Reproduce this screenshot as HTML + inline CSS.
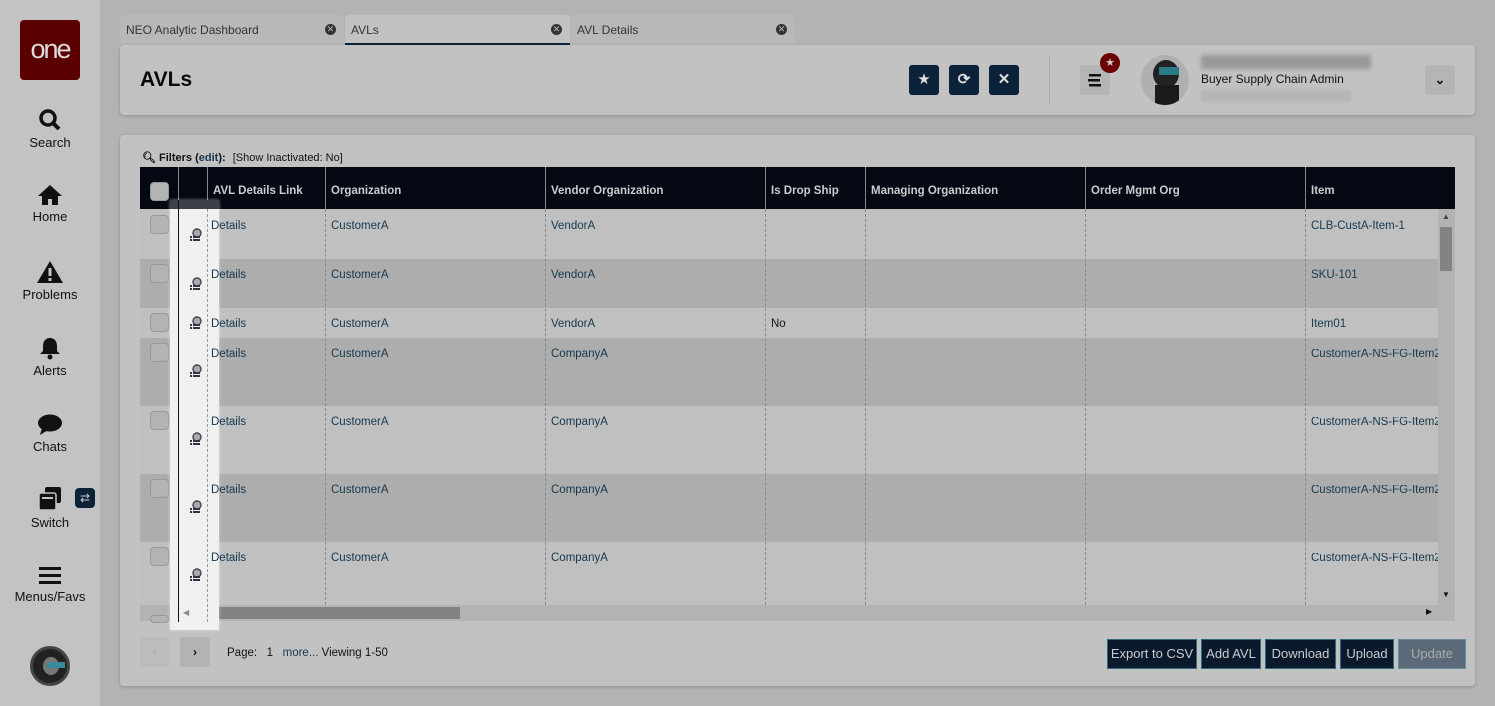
<!DOCTYPE html>
<html><head><style>
*{box-sizing:border-box;margin:0;padding:0}
body{width:1495px;height:706px;background:#b3b3b3;font-family:"Liberation Sans",sans-serif;position:relative;overflow:hidden;font-size:12px;color:#111}
.side{position:absolute;left:0;top:0;width:100px;height:706px;background:#c3c3c3}
.logo{position:absolute;left:20px;top:20px;width:60px;height:60px;background:#5a0000;border-radius:4px;color:#ddd;font-size:27px;text-align:center;line-height:58px;letter-spacing:-2px}
.nav{position:absolute;left:0;width:100px;text-align:center;font-size:13px;color:#111}
.abs{position:absolute;white-space:nowrap}
.tab{position:absolute;top:15px;height:30px;background:#b8b8b8;border-radius:4px 4px 0 0;font-size:12px;color:#333;padding:8px 6px}
.tab .x{position:absolute;right:8px;top:9px;width:11px;height:11px;border-radius:50%;background:#333;color:#bbb;font-size:9px;line-height:11px;text-align:center}
.card{position:absolute;background:#c2c2c2;border-radius:4px;box-shadow:0 1px 3px rgba(0,0,0,.2)}
.btn{position:absolute;top:65px;width:30px;height:30px;background:#0c2238;border-radius:3px;color:#ddd;text-align:center;line-height:30px;font-size:15px}
.hdr{position:absolute;top:167px;left:140px;width:1315px;height:42px;background:#030813}
.hdr div{position:absolute;top:0;height:42px;color:#ccc;font-weight:bold;font-size:11.5px;line-height:48px;padding-left:5px;border-left:1px solid #888}
.row{position:absolute;left:140px;width:1298px}
.vl{position:absolute;top:209px;height:396px;border-left:1px dashed #888}
.cb{position:absolute;left:150px;width:19px;height:19px;border:1.5px solid #999;border-radius:4px;background:#b3b3b3}
.fbtn{position:absolute;top:639px;height:30px;background:#0a1a2c;border:1px solid #2c6a7c;color:#ccc;font-size:13px;text-align:center;line-height:28px}
</style></head><body>
<div class="side">
<div class="logo">one</div>
<div class="nav" style="top:108px"><svg width="24" height="24" viewBox="0 0 24 24"><circle cx="10" cy="10" r="7" stroke="#111" stroke-width="3.5" fill="none"/><path d="M15 15l6 6" stroke="#111" stroke-width="4"/></svg><br>Search</div>
<div class="nav" style="top:184px"><svg width="26" height="22" viewBox="0 0 26 22"><path d="M13 1L1 12h4v9h6v-6h4v6h6v-9h4z" fill="#111"/></svg><br>Home</div>
<div class="nav" style="top:260px"><svg width="28" height="24" viewBox="0 0 28 24"><path d="M14 1L1 23h26z" fill="#111"/><rect x="12.5" y="8" width="3" height="8" fill="#c3c3c3"/><rect x="12.5" y="18" width="3" height="3" fill="#c3c3c3"/></svg><br>Problems</div>
<div class="nav" style="top:336px"><svg width="22" height="24" viewBox="0 0 22 24"><path d="M11 2c-5 0-7 4-7 8v5l-3 3h20l-3-3v-5c0-4-2-8-7-8z" fill="#111"/><circle cx="11" cy="21" r="2.5" fill="#111"/></svg><br>Alerts</div>
<div class="nav" style="top:414px"><svg width="26" height="22" viewBox="0 0 26 22"><ellipse cx="13" cy="9" rx="12" ry="8.5" fill="#111"/><path d="M5 14l-2 7 8-5z" fill="#111"/></svg><br>Chats</div>
<div class="nav" style="top:486px"><svg width="26" height="26" viewBox="0 0 26 26"><rect x="8" y="1" width="16" height="16" rx="2" fill="#111"/><rect x="2" y="7" width="17" height="17" rx="2" fill="#111" stroke="#c3c3c3" stroke-width="1.5"/><rect x="5" y="11" width="11" height="2" fill="#c3c3c3"/></svg><br>Switch</div>
<div class="abs" style="left:75px;top:488px;width:20px;height:20px;background:#0c2238;border-radius:4px;color:#ccc;font-size:12px;text-align:center;line-height:20px">⇄</div>
<div class="nav" style="top:566px"><svg width="24" height="20" viewBox="0 0 24 20"><rect x="1" y="1" width="22" height="3" fill="#111"/><rect x="1" y="8" width="22" height="3" fill="#111"/><rect x="1" y="15" width="22" height="3" fill="#111"/></svg><br>Menus/Favs</div>
<div class="abs" style="left:30px;top:646px;width:40px;height:40px;border-radius:50%;background:#222;border:3px solid #444"><div class="abs" style="left:10px;top:8px;width:16px;height:18px;border-radius:50%;background:#777"></div><div class="abs" style="left:14px;top:13px;width:18px;height:6px;background:#3a8a9a"></div></div>
</div>

<div class="tab" style="left:120px;width:224px">NEO Analytic Dashboard<span class="x">✕</span></div>
<div class="tab" style="left:345px;width:225px;background:#c2c2c2;border-bottom:2px solid #0c2238">AVLs<span class="x">✕</span></div>
<div class="tab" style="left:571px;width:224px">AVL Details<span class="x">✕</span></div>

<div class="card" style="left:120px;top:45px;width:1355px;height:70px"></div>
<div class="abs" style="left:140px;top:68px;font-size:21px;font-weight:bold;color:#0a0a0a">AVLs</div>
<div class="btn" style="left:909px">★</div>
<div class="btn" style="left:949px;font-weight:bold">⟳</div>
<div class="btn" style="left:989px;font-weight:bold">✕</div>
<div class="abs" style="left:1049px;top:55px;width:1px;height:50px;background:#aaa"></div>
<div class="abs" style="left:1080px;top:65px;width:30px;height:30px;background:#b5b5b5;border-radius:3px"><svg width="30" height="30"><rect x="9" y="9" width="12" height="2.5" fill="#111"/><rect x="8" y="14" width="12" height="2.5" fill="#111"/><rect x="9" y="19" width="12" height="2.5" fill="#111"/></svg></div>
<div class="abs" style="left:1100px;top:53px;width:20px;height:20px;border-radius:50%;background:#6a0000;color:#ccc;font-size:11px;text-align:center;line-height:20px">★</div>
<div class="abs" style="left:1141px;top:55px;width:48px;height:50px;border-radius:50%;background:#b0b0b0;overflow:hidden"><div class="abs" style="left:12px;top:5px;width:26px;height:28px;border-radius:50%;background:#222"></div><div class="abs" style="left:18px;top:12px;width:20px;height:8px;background:#2a7a8a"></div><div class="abs" style="left:14px;top:30px;width:24px;height:22px;background:#1a1a1a"></div></div>
<div class="abs" style="left:1201px;top:55px;width:170px;height:14px;background:#999;filter:blur(2px)"></div>
<div class="abs" style="left:1201px;top:72px;font-size:12px;color:#111">Buyer Supply Chain Admin</div>
<div class="abs" style="left:1201px;top:90px;width:150px;height:12px;background:#b6b6b6;filter:blur(2px)"></div>
<div class="abs" style="left:1425px;top:65px;width:30px;height:30px;background:#b5b5b5;border-radius:3px;text-align:center;line-height:30px;font-size:13px;font-weight:bold">⌄</div>

<div class="card" style="left:120px;top:135px;width:1355px;height:551px"></div>
<div class="abs" style="left:142px;top:151px;font-size:11px;font-weight:bold;color:#111">🔍︎ Filters (<span style="color:#16384f">edit</span>): <span style="font-weight:normal;margin-left:4px">[Show Inactivated: No]</span></div>

<div class="hdr">
<div style="left:38px;width:29px"></div>
<div style="left:67px;width:118px">AVL Details Link</div>
<div style="left:185px;width:220px">Organization</div>
<div style="left:405px;width:220px">Vendor Organization</div>
<div style="left:625px;width:100px">Is Drop Ship</div>
<div style="left:725px;width:220px">Managing Organization</div>
<div style="left:945px;width:220px">Order Mgmt Org</div>
<div style="left:1165px;width:150px">Item</div>
</div>
<div class="abs" style="left:150px;top:182px;width:19px;height:19px;border:1.5px solid #999;border-radius:4px;background:#b3b3b3"></div>

<div class="row" style="top:209px;height:50px;background:#c0c0c0"></div>
<div class="row" style="top:259px;height:49px;background:#adadad"></div>
<div class="row" style="top:308px;height:30px;background:#c0c0c0"></div>
<div class="row" style="top:338px;height:68px;background:#adadad"></div>
<div class="row" style="top:406px;height:68px;background:#c0c0c0"></div>
<div class="row" style="top:474px;height:68px;background:#adadad"></div>
<div class="row" style="top:542px;height:63px;background:#c0c0c0"></div>
<div class="row" style="top:605px;height:16px;background:#b3b3b3;width:1315px"></div>
<div class="abs" style="left:197px;top:607px;width:263px;height:12px;background:#838383"></div>
<div class="abs" style="left:1438px;top:209px;width:17px;height:396px;background:#b3b3b3"></div>
<div class="abs" style="left:1440px;top:227px;width:12px;height:44px;background:#838383"></div>
<div class="abs" style="left:1442px;top:212px;font-size:8px;color:#444">▲</div>
<div class="abs" style="left:1442px;top:590px;font-size:8px;color:#111">▼</div>
<div class="abs" style="left:1426px;top:607px;font-size:8px;color:#111">▶</div>

<div class="vl" style="left:325px"></div><div class="vl" style="left:545px"></div><div class="vl" style="left:765px"></div><div class="vl" style="left:865px"></div><div class="vl" style="left:1085px"></div><div class="vl" style="left:1305px"></div>

<div class="cb" style="top:215px"></div><div class="cb" style="top:264px"></div><div class="cb" style="top:313px"></div><div class="cb" style="top:343px"></div><div class="cb" style="top:411px"></div><div class="cb" style="top:479px"></div><div class="cb" style="top:547px"></div><div class="cb" style="top:615px;height:8px"></div>

<div class="abs" style="left:170px;top:200px;width:49px;height:430px;background:#f0f0f0;box-shadow:0 0 3px rgba(255,255,255,.5)"></div>
<div class="abs" style="left:170px;top:200px;width:49px;height:9px;background:#3b4049"></div>
<div class="abs" style="left:178px;top:200px;width:1px;height:422px;background:#111"></div>
<div class="abs" style="left:207px;top:209px;height:413px;border-left:1px dashed #999"></div>

<div style="position:absolute;left:0;top:0;font-size:11.5px;color:#16384f;line-height:1">
<div class="abs" style="left:211px;top:221px">Details</div>
<div class="abs" style="left:211px;top:270px">Details</div>
<div class="abs" style="left:211px;top:319px">Details</div>
<div class="abs" style="left:211px;top:349px">Details</div>
<div class="abs" style="left:211px;top:417px">Details</div>
<div class="abs" style="left:211px;top:485px">Details</div>
<div class="abs" style="left:211px;top:553px">Details</div>
</div>

<svg class="abs" style="left:188px;top:228px" width="14" height="14"><circle cx="9" cy="5" r="4" fill="#aaa" stroke="#445" stroke-width="1.4"/><rect x="2" y="8" width="2" height="2" fill="#334"/><rect x="5" y="8" width="7" height="2" fill="#334"/><rect x="2" y="11" width="2" height="2" fill="#334"/><rect x="5" y="11" width="7" height="2" fill="#334"/></svg>
<svg class="abs" style="left:188px;top:277px" width="14" height="14"><circle cx="9" cy="5" r="4" fill="#aaa" stroke="#445" stroke-width="1.4"/><rect x="2" y="8" width="2" height="2" fill="#334"/><rect x="5" y="8" width="7" height="2" fill="#334"/><rect x="2" y="11" width="2" height="2" fill="#334"/><rect x="5" y="11" width="7" height="2" fill="#334"/></svg>
<svg class="abs" style="left:188px;top:316px" width="14" height="14"><circle cx="9" cy="5" r="4" fill="#aaa" stroke="#445" stroke-width="1.4"/><rect x="2" y="8" width="2" height="2" fill="#334"/><rect x="5" y="8" width="7" height="2" fill="#334"/><rect x="2" y="11" width="2" height="2" fill="#334"/><rect x="5" y="11" width="7" height="2" fill="#334"/></svg>
<svg class="abs" style="left:188px;top:364px" width="14" height="14"><circle cx="9" cy="5" r="4" fill="#aaa" stroke="#445" stroke-width="1.4"/><rect x="2" y="8" width="2" height="2" fill="#334"/><rect x="5" y="8" width="7" height="2" fill="#334"/><rect x="2" y="11" width="2" height="2" fill="#334"/><rect x="5" y="11" width="7" height="2" fill="#334"/></svg>
<svg class="abs" style="left:188px;top:432px" width="14" height="14"><circle cx="9" cy="5" r="4" fill="#aaa" stroke="#445" stroke-width="1.4"/><rect x="2" y="8" width="2" height="2" fill="#334"/><rect x="5" y="8" width="7" height="2" fill="#334"/><rect x="2" y="11" width="2" height="2" fill="#334"/><rect x="5" y="11" width="7" height="2" fill="#334"/></svg>
<svg class="abs" style="left:188px;top:500px" width="14" height="14"><circle cx="9" cy="5" r="4" fill="#aaa" stroke="#445" stroke-width="1.4"/><rect x="2" y="8" width="2" height="2" fill="#334"/><rect x="5" y="8" width="7" height="2" fill="#334"/><rect x="2" y="11" width="2" height="2" fill="#334"/><rect x="5" y="11" width="7" height="2" fill="#334"/></svg>
<svg class="abs" style="left:188px;top:568px" width="14" height="14"><circle cx="9" cy="5" r="4" fill="#aaa" stroke="#445" stroke-width="1.4"/><rect x="2" y="8" width="2" height="2" fill="#334"/><rect x="5" y="8" width="7" height="2" fill="#334"/><rect x="2" y="11" width="2" height="2" fill="#334"/><rect x="5" y="11" width="7" height="2" fill="#334"/></svg>
<div class="abs" style="left:183px;top:608px;font-size:8px;color:#888">◀</div>

<div style="position:absolute;left:0;top:0;font-size:11.5px;color:#16384f;line-height:1">
<div class="abs" style="left:331px;top:221px">CustomerA</div><div class="abs" style="left:551px;top:221px">VendorA</div><div class="abs" style="left:1311px;top:221px">CLB-CustA-Item-1</div>
<div class="abs" style="left:331px;top:270px">CustomerA</div><div class="abs" style="left:551px;top:270px">VendorA</div><div class="abs" style="left:1311px;top:270px">SKU-101</div>
<div class="abs" style="left:331px;top:319px">CustomerA</div><div class="abs" style="left:551px;top:319px">VendorA</div><div class="abs" style="left:771px;top:319px;color:#111">No</div><div class="abs" style="left:1311px;top:319px">Item01</div>
<div class="abs" style="left:331px;top:349px">CustomerA</div><div class="abs" style="left:551px;top:349px">CompanyA</div><div class="abs" style="left:1311px;top:349px;width:127px;overflow:hidden">CustomerA-NS-FG-Item20</div>
<div class="abs" style="left:331px;top:417px">CustomerA</div><div class="abs" style="left:551px;top:417px">CompanyA</div><div class="abs" style="left:1311px;top:417px;width:127px;overflow:hidden">CustomerA-NS-FG-Item21</div>
<div class="abs" style="left:331px;top:485px">CustomerA</div><div class="abs" style="left:551px;top:485px">CompanyA</div><div class="abs" style="left:1311px;top:485px;width:127px;overflow:hidden">CustomerA-NS-FG-Item22</div>
<div class="abs" style="left:331px;top:553px">CustomerA</div><div class="abs" style="left:551px;top:553px">CompanyA</div><div class="abs" style="left:1311px;top:553px;width:127px;overflow:hidden">CustomerA-NS-FG-Item23</div>
</div>

<div class="abs" style="left:140px;top:637px;width:30px;height:30px;background:#bcbcbc;border-radius:3px;color:#aaa;text-align:center;line-height:30px">‹</div>
<div class="abs" style="left:180px;top:637px;width:30px;height:30px;background:#b3b3b3;border-radius:3px;color:#111;text-align:center;line-height:30px;font-weight:bold">›</div>
<div class="abs" style="left:227px;top:647px;font-size:11.5px">Page:&nbsp;&nbsp; 1 &nbsp;&nbsp;<span style="color:#16384f">more...</span> Viewing 1-50</div>

<div class="fbtn" style="left:1107px;width:90px">Export to CSV</div>
<div class="fbtn" style="left:1201px;width:60px">Add AVL</div>
<div class="fbtn" style="left:1265px;width:71px">Download</div>
<div class="fbtn" style="left:1340px;width:54px">Upload</div>
<div class="fbtn" style="left:1398px;width:68px;background:#5a6a78;color:#aaa;border-color:#6a8a9a">Update</div>
</body></html>
